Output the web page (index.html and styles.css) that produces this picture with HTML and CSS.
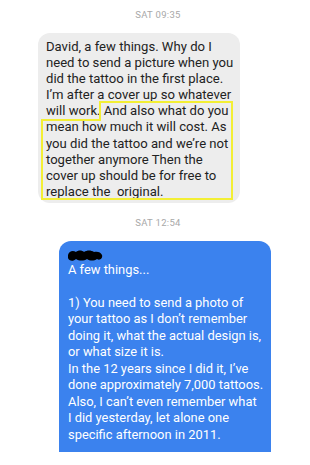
FILE: index.html
```html
<!DOCTYPE html>
<html lang="en">
<head>
    <meta charset="UTF-8">
    <meta name="viewport" content="width=device-width, initial-scale=1.0">
    <title>Messages</title>
    <link rel="stylesheet" href="styles.css">
</head>
<body>
    <div class="thread">
        <div class="stamp stamp-first">SAT 09:35</div>
        <div class="bubble bubble-in">
            David, a few things. Why do I<br>
            need to send a picture when you<br>
            did the tattoo in the first place.<br>
            I’m after a cover up so whatever<br>
            will work. And also what do you<br>
            mean how much it will cost. As<br>
            you did the tattoo and we’re not<br>
            together anymore Then the<br>
            cover up should be for free to<br>
            replace the&nbsp; original.
            <svg class="mark" width="202" height="172" viewBox="0 0 202 172">
                <polygon points="62,69 194,69 194,166 4,166 4,87 62,87" fill="none" stroke="#f3ef34" stroke-width="2"/>
            </svg>
        </div>
        <div class="stamp stamp-second">SAT 12:54</div>
        <div class="bubble bubble-out">
            <svg class="redact" width="38" height="13" viewBox="0 0 38 13">
                <path d="M2 6 C3 2 7 1 10 3 C12 1 16 1 18 3 C21 1 25 1 28 3 C31 2 35 3 36 6 C37 9 34 12 31 10 C28 12 24 12 21 10 C18 12 13 12 10 10 C7 13 3 12 2 9 Z" fill="#000"/>
            </svg>
            <div class="lines">
                A few things...<br>
                <br>
                1) You need to send a photo of<br>
                your tattoo as I don’t remember<br>
                doing it, what the actual design is,<br>
                or what size it is.<br>
                In the 12 years since I did it, I’ve<br>
                done approximately 7,000 tattoos.<br>
                Also, I can’t even remember what<br>
                I did yesterday, let alone one<br>
                specific afternoon in 2011.
            </div>
        </div>
    </div>
</body>
</html>
```

FILE: styles.css
```css
body {
    margin: 0;
    background: #ffffff;
    font-family: Roboto, "Liberation Sans", Arial, sans-serif;
}
.thread {
    display: flex;
    flex-direction: column;
    padding-top: 9px;
}
.stamp {
    text-align: center;
    font-size: 9.5px;
    line-height: 12px;
    color: #a8a8a8;
    letter-spacing: 0.3px;
    padding-left: 6px;
}
.stamp-second {
    margin-top: 14px;
    margin-bottom: 12px;
}
.bubble {
    position: relative;
    box-sizing: border-box;
    white-space: nowrap;
}
.bubble-in {
    margin: 12px 0 0 38px;
    width: 202px;
    padding: 6px 6px 3px 8px;
    background: #ededed;
    border-radius: 12px;
    color: #222;
    font-size: 13.1px;
    line-height: 16.1px;
}
.mark {
    position: absolute;
    left: 0;
    top: 0;
}
.bubble-out {
    margin-left: 59px;
    width: 212px;
    padding: 8px 6px 9px 9px;
    background: #3b82ee;
    border-radius: 12px 12px 0 0;
    color: #ffffff;
    font-size: 12.9px;
    line-height: 16.5px;
}
.redact {
    display: block;
    margin-left: -2px;
}
```
